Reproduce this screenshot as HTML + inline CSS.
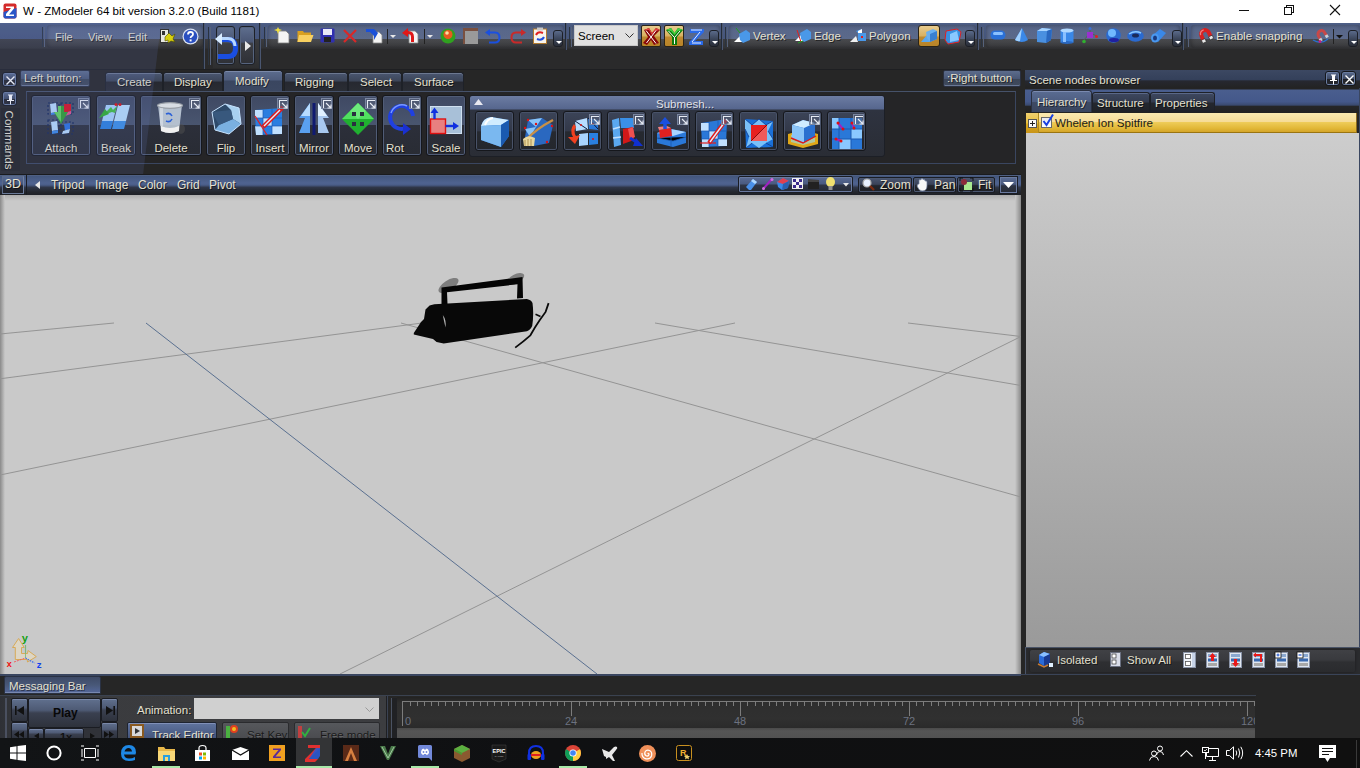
<!DOCTYPE html>
<html><head><meta charset="utf-8">
<style>
*{box-sizing:border-box;margin:0;padding:0}
html,body{width:1360px;height:768px;overflow:hidden;background:#262626;font-family:"Liberation Sans",sans-serif;position:relative}
.a{position:absolute}
svg{position:absolute;overflow:visible}
.t{position:absolute;white-space:nowrap;font-size:11.5px;color:#e4e0d0;text-shadow:1px 1px 0 rgba(0,0,0,.55);line-height:14px}
#title{left:0;top:0;width:1360px;height:23px;background:#fff}
#tb{left:0;top:23px;width:1360px;height:47px;background:#2a2a2b}
.band{position:absolute;top:23px;height:26px;background:linear-gradient(#4e6088 0,#4a5a80 2px,#45557b 16px,#3b3c40 16px,#323336 25px,#2b2b2d 26px)}
.grp{position:absolute;top:25px;height:23px;border-radius:3px;background:linear-gradient(rgba(255,255,255,.07),rgba(255,255,255,.12) 14px,rgba(255,255,255,.07) 14px,rgba(255,255,255,.03));box-shadow:inset 0 0 4px rgba(0,0,0,.35)}
.sep{position:absolute;top:23px;width:2px;height:27px;background:#232a36;border-right:1px solid #4a5670}
.grip{position:absolute;top:27px;width:3px;height:20px;border-left:1px solid #2a3340;border-right:1px solid #56627a}
.ovf{position:absolute;top:30px;width:10px;height:17px;border:1px solid #1c1f26;border-radius:3px;background:linear-gradient(#5a6a8a,#3a4458 55%,#2a2e38)}
.ovf:after{content:"";position:absolute;left:2px;top:10px;border-left:3px solid transparent;border-right:3px solid transparent;border-top:3px solid #fff}
#vph{left:0;top:175px;width:1021px;height:20px;background:linear-gradient(#4f6391,#3a4a6a 45%,#262a33 55%,#1e2026)}
#vp{left:0;top:195px;width:1021px;height:479px;background:#c9c9c9;overflow:hidden}
#rp{left:1026px;top:133px;width:333px;height:514px;background:linear-gradient(#cdcdcd,#9a9a9a)}
#msg{left:0;top:674px;width:1360px;height:64px;background:#262626;border-top:1px solid #3d4a60}
#task{left:0;top:738px;width:1360px;height:30px;background:linear-gradient(90deg,#121416,#0f1012 40%,#101010)}

.xbtn{width:15px;height:15px;border:1px solid #15171c;border-radius:3px;background:linear-gradient(#5a6c90,#3e4a64 50%,#202228 55%,#262830);box-shadow:inset 0 0 0 1px #6a7ca0}
.lbl{height:17px;border:1px solid #2a3040;border-radius:2px;background:linear-gradient(#5c6c8c,#4a5876 50%,#3c4658 55%,#404a5c);box-shadow:inset 0 -1px 0 #6a7894}
.tab{top:72px;height:19px;border:1px solid #1e2128;border-bottom:none;border-radius:3px 3px 0 0;background:linear-gradient(#4a5670,#3c4558 45%,#262830 50%,#2a2d34);box-shadow:inset 0 1px 0 #6c7890}
.tab.act{top:70px;height:21px;background:linear-gradient(#5c6c8e,#4e5c7c 45%,#3a4660 50%,#3c4862);box-shadow:inset 0 1px 0 #7a88a8}
.cbtn{top:95px;height:61px;border:1px solid #15171c;border-radius:3px;background:linear-gradient(#3f4963,#49556f 49%,#2c2f3a 50%,#292c34);box-shadow:inset 0 0 0 1px #505c76}
.sbtn{top:111px;width:39px;height:40px;border:1px solid #15171c;border-radius:3px;background:linear-gradient(#3c4458,#323848 50%,#262930 52%,#24272d);box-shadow:inset 0 0 0 1px #485268}
.crn{width:11px;height:11px;border:1px solid #7a86a0;background:rgba(90,100,125,.6)}

#vp{left:0;top:195px;width:1021px;height:479px;background:#c9c9c9;overflow:hidden}
#rp{left:1026px;top:133px;width:333px;height:514px;background:linear-gradient(#cdcdcd,#9a9a9a)}
#msg{left:0;top:674px;width:1360px;height:64px;background:#262626;border-top:1px solid #3d4a60}
#task{left:0;top:738px;width:1360px;height:30px;background:linear-gradient(90deg,#121416,#0f1012 40%,#101010)}
.vbtn{top:177px;height:16px;border:1px solid #1a1d24;border-radius:2px;background:linear-gradient(#4a5670,#3a4258 45%,#22252c 55%,#1e2026);box-shadow:inset 0 0 0 1px #4a5670}

.pbtn{border:1px solid #1a1c22;border-radius:2px;background:linear-gradient(#60708e,#4e5a74 40%,#3a4050 50%,#2e323c);box-shadow:inset 0 1px 0 #7a88a8}
</style></head><body>
<!-- TITLE -->
<div id="title" class="a">
 <svg style="left:3px;top:3px" width="14" height="16" viewBox="0 0 14 16">
  <rect x="0.5" y="0.5" width="13" height="15" rx="2" fill="#d42a2a"/>
  <path d="M0.5 9 L13.5 5 L13.5 13.5 Q13.5 15.5 11.5 15.5 L2.5 15.5 Q0.5 15.5 0.5 13.5Z" fill="#2a55c8"/>
  <path d="M3 3.5 H11 V5.5 L6 11.5 H11 V13 H3 V11 L8 5 H3Z" fill="#fff"/>
 </svg>
 <div class="t" style="left:23px;top:4px;color:#000;text-shadow:none;font-size:11.6px">W - ZModeler 64 bit version 3.2.0 (Build 1181)</div>
 <div class="a" style="left:1239px;top:10px;width:10px;height:1px;background:#111"></div>
 <div class="a" style="left:1286px;top:5px;width:8px;height:8px;border:1px solid #111"></div>
 <div class="a" style="left:1284px;top:7px;width:8px;height:8px;border:1px solid #111;background:#fff"></div>
 <svg style="left:1330px;top:5px" width="10" height="10"><path d="M0 0 L10 10 M10 0 L0 10" stroke="#111" stroke-width="1.1"/></svg>
</div>
<!-- TOOLBAR -->
<div id="tb" class="a"></div>
<div class="band" style="left:0;width:1360px"></div>

<!-- group separators & grippers -->
<div class="sep" style="left:203px;height:46px"></div>
<div class="grip" style="left:42px"></div>
<div class="grp" style="left:47px;width:156px"></div>
<div class="t" style="left:55px;top:30px;font-size:11px">File</div>
<div class="t" style="left:88px;top:30px;font-size:11px">View</div>
<div class="t" style="left:128px;top:30px;font-size:11px">Edit</div>
<svg style="left:160px;top:29px" width="16" height="15" viewBox="0 0 16 15">
 <rect x="0.5" y="0.5" width="8" height="13" fill="#e8e8e0" stroke="#333"/>
 <rect x="2" y="2" width="3" height="4" fill="#333"/>
 <path d="M5 8 L9 4 L12 7 L15 5 L13 10 L15 13 L11 12 L8 14 L8 11 L5 12Z" fill="#d8d010" stroke="#4a4a00" stroke-width=".6"/>
</svg>
<svg style="left:182px;top:28px" width="17" height="17" viewBox="0 0 17 17">
 <circle cx="8.5" cy="8.5" r="8" fill="#d8e0f0"/>
 <circle cx="8.5" cy="8.5" r="6.8" fill="#2a4fc0"/>
 <path d="M6 6.5 Q6 4 8.5 4 Q11 4 11 6.3 Q11 7.8 9.3 8.5 Q8.6 8.9 8.6 10" stroke="#fff" stroke-width="1.8" fill="none"/>
 <rect x="7.6" y="11.4" width="2" height="2" fill="#fff"/>
</svg>
<!-- undo group -->
<div class="grip" style="left:208px;height:38px"></div>
<div class="a" style="left:213px;top:39px;width:46px;height:29px;background:linear-gradient(#3a3b3e,#2e2f31)"></div>
<div class="a" style="left:216px;top:26px;width:19px;height:39px;border:1px solid #1e2128;border-radius:3px;box-shadow:inset 0 0 0 1px #56647e;background:linear-gradient(#5e6e8e,#4a5674 40%,#3c3e44 45%,#2e3036)"></div>
<div class="a" style="left:239px;top:26px;width:16px;height:39px;border:1px solid #1e2128;border-radius:3px;box-shadow:inset 0 0 0 1px #56647e;background:linear-gradient(#5e6e8e,#4a5674 40%,#3c3e44 45%,#2e3036)"></div>
<svg style="left:215px;top:33px" width="23" height="28" viewBox="0 0 23 28">
 <path d="M6 6.5 H13 Q20.5 6.5 20.5 15 Q20.5 23.5 13 23.5 H3" stroke="#1a4ee0" stroke-width="5" fill="none"/>
 <path d="M6 5.5 H13 Q19.5 5.5 20 13" stroke="#b8d8ff" stroke-width="3" fill="none"/>
 <path d="M0 6 L7 0 L7 12Z" fill="#d8ecff"/>
</svg>
<svg style="left:245px;top:41px" width="6" height="10"><path d="M0 0 L6 5 L0 10Z" fill="#e8e8e8"/></svg>
<div class="sep" style="left:259px;height:46px"></div>
<!-- group C -->
<div class="grip" style="left:264px"></div>
<div class="grp" style="left:268px;width:296px"></div>
<svg style="left:274px;top:27px" width="16" height="17" viewBox="0 0 16 17">
 <path d="M4 4 H12 L15 7 V16 H4Z" fill="#f4f4f4" stroke="#7c7c7c" stroke-width=".8"/>
 <path d="M0 3 L3 2 L4 0 L5 2 L8 3 L5 4 L4 7 L3 4Z" fill="#f0e040"/>
</svg>
<svg style="left:297px;top:29px" width="17" height="14" viewBox="0 0 17 14">
 <path d="M0.5 2 H6 L7 3.5 H14 V13 H0.5Z" fill="#d8a020"/>
 <path d="M2 6 H16.5 L14 13 H0.5Z" fill="#f8d060"/>
</svg>
<svg style="left:320px;top:28px" width="15" height="15" viewBox="0 0 15 15">
 <rect x="0.5" y="0.5" width="14" height="14" rx="1" fill="#3030b0"/>
 <rect x="3" y="1" width="9" height="6" fill="#e8e8f8"/>
 <rect x="4" y="9" width="7" height="5" fill="#222"/>
</svg>
<svg style="left:343px;top:29px" width="14" height="14"><path d="M1 1 L13 13 M13 1 L1 13" stroke="#d82828" stroke-width="2.2"/></svg>
<svg style="left:366px;top:27px" width="17" height="17" viewBox="0 0 17 17">
 <path d="M7 5 H13 L16 8 V16 H7Z" fill="#f4f4f4" stroke="#888" stroke-width=".8"/>
 <path d="M0 2 H8 L12 6 L8 13 L8 9 L4 5 L0 5Z" fill="#1a50d8"/>
</svg>
<div class="a" style="left:387px;top:29px;width:1px;height:15px;background:#222"></div>
<svg style="left:390px;top:35px" width="6" height="4"><path d="M0 0 H6 L3 3Z" fill="#e8e8e8"/></svg>
<svg style="left:402px;top:27px" width="17" height="17" viewBox="0 0 17 17">
 <path d="M7 4 H13 L16 7 V16 H7Z" fill="#f4f4f4" stroke="#888" stroke-width=".8"/>
 <path d="M0 6 L6 1 V4 Q12 4 12 10 V15 H9 V10 Q9 7 6 7 V10Z" fill="#e01818"/>
</svg>
<div class="a" style="left:424px;top:29px;width:1px;height:15px;background:#222"></div>
<svg style="left:427px;top:35px" width="6" height="4"><path d="M0 0 H6 L3 3Z" fill="#e8e8e8"/></svg>
<svg style="left:440px;top:28px" width="16" height="16" viewBox="0 0 16 16">
 <circle cx="8" cy="8" r="7.5" fill="#30a020"/>
 <circle cx="8" cy="6.5" r="4.5" fill="#e85a20"/>
 <circle cx="7" cy="5" r="1.8" fill="#ffe0a0"/>
</svg>
<svg style="left:463px;top:28px" width="15" height="16" viewBox="0 0 15 16">
 <rect x="0" y="0" width="15" height="16" fill="#7a5040"/>
 <rect x="2" y="3" width="13" height="13" fill="#9a9a9a"/>
</svg>
<svg style="left:485px;top:29px" width="16" height="15" viewBox="0 0 16 15">
 <path d="M5 3.5 H10 Q14.5 3.5 14.5 8.5 Q14.5 13.5 10 13.5 H4" stroke="#1a50e0" stroke-width="2" fill="none"/>
 <path d="M0 3.5 L5 0 V7Z" fill="#1a50e0"/>
</svg>
<svg style="left:510px;top:29px" width="16" height="15" viewBox="0 0 16 15">
 <path d="M11 3.5 H6 Q1.5 3.5 1.5 8.5 Q1.5 13.5 6 13.5 H12" stroke="#c82a2a" stroke-width="2" fill="none"/>
 <path d="M16 3.5 L11 0 V7Z" fill="#c82a2a"/>
</svg>
<svg style="left:533px;top:27px" width="14" height="17" viewBox="0 0 14 17">
 <rect x="0.5" y="2" width="13" height="14.5" fill="#f8f4ec" stroke="#b07a30"/>
 <rect x="4" y="0.5" width="6" height="3" fill="#c8c8c8"/>
 <path d="M3 8 Q5 4 10 6" stroke="#e02020" stroke-width="2" fill="none"/>
 <path d="M11 10 Q9 14 4 12" stroke="#2050e0" stroke-width="2" fill="none"/>
</svg>
<div class="ovf" style="left:553px"></div>
<div class="sep" style="left:565px"></div>
<!-- group D -->
<div class="grip" style="left:569px"></div>
<div class="grp" style="left:572px;width:148px"></div>
<div class="a" style="left:574px;top:25px;width:64px;height:21px;background:#e1e1e1;border:1px solid #c8c8c8"></div>
<div class="t" style="left:578px;top:29px;color:#000;text-shadow:none;font-size:11.5px">Screen</div>
<svg style="left:625px;top:33px" width="9" height="5"><path d="M0.5 0.5 L4.5 4.5 L8.5 0.5" stroke="#333" fill="none"/></svg>
<div class="a" style="left:641px;top:25px;width:20px;height:22px;border:1px solid #2a2418;border-radius:2px;background:linear-gradient(#e8cc90,#d8b060 50%,#c08a30 55%,#b88428)"></div>
<svg style="left:643px;top:28px" width="17" height="17" viewBox="0 0 17 17"><path d="M1 2 L6 0 L9 5 L13 0 L17 2 L11 8 L16 15 L11 17 L8 12 L4 17 L0 15 L5 9Z" fill="#8a0808"/><path d="M1 2 L6 0 L9 5 L13 0 L17 2 L12 3 L9 7 L6 2Z" fill="#e04040"/><path d="M3 2.5 L13 15.5 M13 2.5 L3.5 15" stroke="#fff" stroke-width="1"/></svg>
<div class="a" style="left:664px;top:25px;width:20px;height:22px;border:1px solid #2a2418;border-radius:2px;background:linear-gradient(#e8cc90,#d8b060 50%,#c08a30 55%,#b88428)"></div>
<svg style="left:666px;top:28px" width="17" height="17" viewBox="0 0 17 17"><path d="M0 2 L5 0 L8.5 5 L12 0 L17 2 L11 9 L11 17 L6 17 L6 9Z" fill="#0a7a0a"/><path d="M0 2 L5 0 L8.5 5 L12 0 L17 2 L12 3 L8.5 7 L5 3Z" fill="#40d040"/><path d="M2.5 3 L8.5 9.5 L8.5 16 M8.5 9.5 L14 3" stroke="#fff" stroke-width="1" fill="none"/></svg>
<svg style="left:689px;top:29px" width="15" height="16" viewBox="0 0 15 16"><path d="M1 0 H15 V3 L6 12 H14 V16 H0 V13 L9 4 H1Z" fill="#2a6ae8"/><path d="M2 1 H13 M11 3 L3 13 M3 14 H12" stroke="#e8f0ff" stroke-width="1"/></svg>
<div class="ovf" style="left:709px"></div>
<div class="sep" style="left:721px"></div>
<!-- group E -->
<div class="grip" style="left:725px"></div>
<div class="grp" style="left:729px;width:247px"></div>
<svg style="left:734px;top:28px" width="17" height="16" viewBox="0 0 17 16"><path d="M0 14 L8 6 L8 14Z" fill="#fff"/><path d="M5 6 L12 2 L16 5 L16 12 L9 15 L6 12Z" fill="#4a98e8"/><path d="M2 0 L6 5" stroke="#20a020"/></svg>
<div class="t" style="left:753px;top:29px;font-size:11.5px">Vertex</div>
<svg style="left:795px;top:27px" width="17" height="18" viewBox="0 0 17 18"><path d="M0 14 L8 6 L8 14Z" fill="#fff"/><path d="M5 6 L12 2 L16 5 L16 12 L9 15 L6 12Z" fill="#4a98e8"/><path d="M2 3 L6 15" stroke="#e02020"/><path d="M3 16 L8 14" stroke="#20a020"/></svg>
<div class="t" style="left:814px;top:29px;font-size:11.5px">Edge</div>
<svg style="left:850px;top:28px" width="17" height="16" viewBox="0 0 17 16"><path d="M0 14 L6 8 L8 14Z" fill="#f0f0f0"/><path d="M6 3 L12 1 L12 5 L16 5 L16 13 L8 13 L8 5Z" fill="#4a98e8"/><path d="M8 3 L12 1 V5 H8Z" fill="#fff"/><rect x="11" y="8" width="2" height="2" fill="#e02020"/></svg>
<div class="t" style="left:869px;top:29px;font-size:11.5px">Polygon</div>
<div class="a" style="left:918px;top:25px;width:22px;height:22px;border:1px solid #2a2418;border-radius:3px;background:linear-gradient(#e8cc90,#d8b060 50%,#c08a30 55%,#b88428)"></div>
<svg style="left:921px;top:28px" width="17" height="16" viewBox="0 0 17 16"><path d="M0 14 L6 7 L9 14Z" fill="#5aa8f0"/><path d="M5 4 L12 1 L16 3 L16 11 L9 14 L6 10Z" fill="#6ab0f0"/><path d="M9 6 L16 3 V11 L9 14Z" fill="#3a80d0"/></svg>
<svg style="left:944px;top:28px" width="18" height="17" viewBox="0 0 18 17"><path d="M2 3 L13 1 L17 4 L15 14 L4 16 L1 12Z" fill="#3a90e0" stroke="#e02020" stroke-width="1"/><path d="M6 6 L13 3 L15 12 L6 14Z" fill="#8ac8ff"/></svg>
<div class="ovf" style="left:965px"></div>
<div class="sep" style="left:977px"></div>
<!-- group F -->
<div class="grip" style="left:981px"></div>
<div class="grp" style="left:986px;width:194px"></div>
<svg style="left:990px;top:30px" width="16" height="10" viewBox="0 0 16 10"><rect x="0.5" y="0.5" width="15" height="9" rx="4.5" fill="#2a70d8"/><rect x="3" y="2" width="10" height="3" rx="1.5" fill="#8ac0ff"/></svg>
<svg style="left:1014px;top:28px" width="14" height="15" viewBox="0 0 14 15"><path d="M8 0 L14 12 Q8 16 1 12Z" fill="#3a88e8"/><path d="M8 0 L1 12 Q4 14 6 13Z" fill="#a0d0ff"/></svg>
<svg style="left:1037px;top:28px" width="15" height="15" viewBox="0 0 15 15"><path d="M0 3 L5 0 L15 1 L14 12 L9 15 L0 14Z" fill="#4a90e0"/><path d="M0 3 L5 0 L15 1 L10 3Z" fill="#a8d4ff"/><path d="M10 3 L15 1 L14 12 L9 15Z" fill="#2a68c0"/></svg>
<svg style="left:1060px;top:28px" width="14" height="16" viewBox="0 0 14 16"><rect x="0.5" y="2" width="13" height="12.5" fill="#3a88e8"/><ellipse cx="7" cy="2.5" rx="6.5" ry="2" fill="#b0d8ff"/><ellipse cx="7" cy="14.5" rx="6.5" ry="1.5" fill="#2a68c0"/><rect x="3" y="4" width="3" height="10" fill="#8ac0ff"/></svg>
<svg style="left:1082px;top:27px" width="16" height="17" viewBox="0 0 16 17"><path d="M8 6 L1 14 M8 6 L15 9 M8 6 L8 1" stroke="#5a5a5a" stroke-width="1"/><rect x="5" y="5" width="6" height="6" fill="#9a30d0"/><circle cx="8" cy="1.5" r="1.5" fill="#3a70d8"/><circle cx="14.5" cy="9.5" r="1.5" fill="#e02020"/><circle cx="2" cy="14.5" r="1.8" fill="#30b030"/></svg>
<svg style="left:1106px;top:28px" width="15" height="15" viewBox="0 0 15 15"><circle cx="7.5" cy="7.5" r="7.3" fill="#2a6ad0"/><circle cx="6" cy="5" r="4" fill="#70b8ff"/><ellipse cx="8" cy="12" rx="5" ry="2" fill="#2020a0"/></svg>
<svg style="left:1127px;top:30px" width="17" height="12" viewBox="0 0 17 12"><ellipse cx="8.5" cy="6" rx="8.3" ry="5.8" fill="#2a6ad0"/><ellipse cx="8.5" cy="5.5" rx="3.5" ry="2" fill="#1a2a5a"/><path d="M2 4 Q8 0 14 3" stroke="#8ac8ff" stroke-width="1.5" fill="none"/></svg>
<svg style="left:1150px;top:28px" width="17" height="15" viewBox="0 0 17 15"><path d="M2 8 L10 1 L16 5 L8 14Z" fill="#3a88e8"/><ellipse cx="5" cy="10" rx="4" ry="4.5" fill="#4a98f0"/><ellipse cx="5" cy="10" rx="2" ry="2.5" fill="#1a3a80"/></svg>
<div class="ovf" style="left:1172px"></div>
<div class="sep" style="left:1182px"></div>
<!-- group G -->
<div class="grip" style="left:1186px"></div>
<div class="grp" style="left:1191px;width:169px"></div>
<svg style="left:1197px;top:27px" width="17" height="16" viewBox="0 0 17 16"><g transform="rotate(-25 8.5 8)"><path d="M2.5 12 V7 A6 6 0 0 1 14.5 7 V12 H10.5 V7 A2 2 0 0 0 6.5 7 V12Z" fill="#d82020"/><path d="M4 6 A4.5 4.5 0 0 1 9 2.5" stroke="#f08080" stroke-width="1.2" fill="none"/><rect x="2.5" y="11" width="4" height="3.5" fill="#e8e8e8" stroke="#222" stroke-width=".6"/><rect x="10.5" y="11" width="4" height="3.5" fill="#e8e8e8" stroke="#222" stroke-width=".6"/></g></svg>
<div class="t" style="left:1216px;top:29px;font-size:11.6px">Enable snapping</div>
<svg style="left:1313px;top:27px" width="17" height="17" viewBox="0 0 17 17"><g transform="rotate(-30 9 8)"><path d="M4 11 V7 A5 5 0 0 1 14 7 V11 H11 V7 A2 2 0 0 0 7 7 V11Z" fill="#c84848"/><rect x="4" y="10" width="3" height="3" fill="#c8d0d8"/><rect x="11" y="10" width="3" height="3" fill="#c8d0d8"/></g><path d="M0 13 Q8 18 15 12" stroke="#2a70d0" stroke-width="1.3" fill="none"/><circle cx="7" cy="14.5" r="1.5" fill="#c02080"/></svg>
<div class="a" style="left:1333px;top:29px;width:1px;height:15px;background:#222"></div>
<svg style="left:1336px;top:35px" width="7" height="4"><path d="M0 0 H7 L3.5 3.5Z" fill="#111"/></svg>
<div class="ovf" style="left:1348px"></div>

<!-- COMMAND ROW -->
<div class="a" style="left:0;top:69px;width:1021px;height:1px;background:#1e1f22"></div>
<div class="xbtn a" style="left:2px;top:72px"><svg style="left:3px;top:3px" width="9" height="9"><path d="M0.5 0.5 L8.5 8.5 M8.5 0.5 L0.5 8.5" stroke="#fff" stroke-width="1.4"/></svg></div>
<div class="xbtn a" style="left:2px;top:91px"><svg style="left:3px;top:2px" width="9" height="11" viewBox="0 0 9 11"><path d="M2 0.5 H7 V1.5 H6 V6 H8 V7 H5 V10.5 H4 V7 H1 V6 H3 V1.5 H2Z" fill="#fff"/></svg></div>
<div class="a" style="left:1px;top:108px;width:19px;height:63px;background:rgba(0,0,0,.12)"></div><div class="t" style="left:-21px;top:133px;transform:rotate(90deg);font-size:11.5px;width:60px;text-align:center">Commands</div>
<div class="lbl a" style="left:20px;top:70px;width:70px"></div>
<div class="t" style="left:24px;top:71px;font-size:11.5px">Left button:</div>
<div class="tab a" style="left:105px;width:58px"></div><div class="t" style="left:117px;top:75px">Create</div>
<div class="tab a" style="left:163px;width:60px"></div><div class="t" style="left:174px;top:75px">Display</div>
<div class="tab act a" style="left:223px;width:60px"></div><div class="t" style="left:235px;top:74px">Modify</div>
<div class="tab a" style="left:284px;width:64px"></div><div class="t" style="left:295px;top:75px">Rigging</div>
<div class="tab a" style="left:348px;width:54px"></div><div class="t" style="left:360px;top:75px">Select</div>
<div class="tab a" style="left:402px;width:62px"></div><div class="t" style="left:414px;top:75px">Surface</div>
<div class="lbl a" style="left:943px;top:70px;width:78px"></div>
<div class="t" style="left:947px;top:71px;font-size:11.5px">:Right button</div>
<div class="a" style="left:26px;top:91px;width:990px;height:73px;border:1px solid #3a4660;border-top-color:#46526a;background:#252527"></div>
<div class="cbtn a" style="left:31px;width:60px"></div>
<div class="t" style="left:31px;width:60px;text-align:center;top:141px;font-size:11.5px">Attach</div>
<div class="cbtn a" style="left:96px;width:40px"></div>
<div class="t" style="left:96px;width:40px;text-align:center;top:141px;font-size:11.5px">Break</div>
<div class="cbtn a" style="left:140px;width:62px"></div>
<div class="t" style="left:140px;width:62px;text-align:center;top:141px;font-size:11.5px">Delete</div>
<div class="cbtn a" style="left:206px;width:40px"></div>
<div class="t" style="left:206px;width:40px;text-align:center;top:141px;font-size:11.5px">Flip</div>
<div class="cbtn a" style="left:250px;width:40px"></div>
<div class="t" style="left:250px;width:40px;text-align:center;top:141px;font-size:11.5px">Insert</div>
<div class="cbtn a" style="left:294px;width:40px"></div>
<div class="t" style="left:294px;width:40px;text-align:center;top:141px;font-size:11.5px">Mirror</div>
<div class="cbtn a" style="left:338px;width:40px"></div>
<div class="t" style="left:338px;width:40px;text-align:center;top:141px;font-size:11.5px">Move</div>
<div class="cbtn a" style="left:382px;width:40px"></div>
<div class="t" style="left:386px;top:141px;font-size:11.5px">Rot</div>
<div class="cbtn a" style="left:426px;width:40px"></div>
<div class="t" style="left:426px;width:40px;text-align:center;top:141px;font-size:11.5px">Scale</div>
<div class="a" style="left:469px;top:95px;width:416px;height:62px;border:1px solid #1c1f26;border-radius:3px;background:linear-gradient(#6c7ca2,#56668e 13px,#2e3340 14px,#2a2d35)"></div>
<svg style="left:474px;top:99px" width="9" height="6"><path d="M0 6 L4.5 0 L9 6Z" fill="#e8e8f0"/></svg>
<div class="t" style="left:656px;top:97px;font-size:11.5px;color:#e0e0e8">Submesh...</div>
<div class="sbtn a" style="left:475px"></div>
<div class="sbtn a" style="left:519px"></div>
<div class="sbtn a" style="left:563px"></div>
<div class="sbtn a" style="left:607px"></div>
<div class="sbtn a" style="left:651px"></div>
<div class="sbtn a" style="left:695px"></div>
<div class="sbtn a" style="left:739px"></div>
<div class="sbtn a" style="left:783px"></div>
<div class="sbtn a" style="left:827px"></div>


<!-- COMMAND ICONS -->
<svg style="left:47px;top:102px" width="28" height="34" viewBox="0 0 28 34">
 <g stroke="#15285a" stroke-width="1.2" stroke-dasharray="2 2" fill="none"><rect x="1" y="1" width="11" height="11"/><rect x="14" y="1" width="12" height="11"/><rect x="1" y="18" width="11" height="14"/><rect x="14" y="20" width="12" height="12"/></g>
 <path d="M3 2 L9 1 L10 10 L4 11Z" fill="#b8dcff"/><path d="M4 11 L10 10 V12 L4 13Z" fill="#3a88e8"/>
 <path d="M17 2 L24 2 L24 9 L17 11Z" fill="#d81020"/><path d="M17 11 L24 9 V12 L18 14Z" fill="#e05090"/>
 <path d="M4 20 L10 19 L11 28 L5 29Z" fill="#b8dcff"/><path d="M5 29 L11 28 V31 L5 32Z" fill="#3a88e8"/>
 <path d="M17 22 L23 21 L23 27 L18 29Z" fill="#2a70e0"/><path d="M16 29 L23 27 L22 31 L15 32Z" fill="#b8dcff"/>
 <path d="M7 10 H11 V4 L17 4 V10 H21 L14 22Z" fill="#30a030"/><path d="M11 4 L14 4 L14 20 L7 10 H11Z" fill="#60d060"/>
</svg>
<svg style="left:99px;top:103px" width="34" height="29" viewBox="0 0 34 29">
 <path d="M7 2 L18 2 L14 18 L3 18Z" fill="#a8d4ff"/><path d="M3 18 L14 18 L12 26 L1 26Z" fill="#2a80e0"/>
 <path d="M19 2 L31 2 L27 18 L15 18Z" fill="#b8e0ff"/><path d="M15 18 L27 18 L25 26 L13 26Z" fill="#3a90e8"/>
 <path d="M4 12 L12 4 L14 7 L18 3 L16 10 L13 9Z" fill="#40c040"/>
 <path d="M0 15 L10 11 L6 6Z" fill="#30b030"/>
 <circle cx="17" cy="1.5" r="1.5" fill="#e01010"/><circle cx="21" cy="1.5" r="1.5" fill="#e01010"/>
</svg>
<svg style="left:157px;top:102px" width="28" height="34" viewBox="0 0 28 34">
 <ellipse cx="24" cy="27" rx="4" ry="5" fill="#505050" opacity=".5"/>
 <path d="M1 3 L25 3 L22 29 Q13 33 4 29Z" fill="#c8d4e0" opacity=".85"/>
 <path d="M4 24 Q13 28 22 24 L22 29 Q13 33 4 29Z" fill="#f0f0f0"/>
 <ellipse cx="13" cy="3.5" rx="12.5" ry="2.8" fill="#d8dde4" stroke="#9aa0a8" stroke-width="1.2"/>
 <path d="M9 12 Q13 10 15 14 M15 17 Q13 21 9 19" stroke="#2a60d8" stroke-width="1.6" fill="none"/>
 <rect x="3" y="6" width="3" height="18" fill="#fff" opacity=".35"/>
</svg>
<svg style="left:211px;top:103px" width="31" height="32" viewBox="0 0 31 32">
 <path d="M1 9 L14 1 L28 5 L30 21 L18 31 L4 27Z" fill="#2e4a6a"/>
 <path d="M14 1 L28 5 L30 21 L22 16 L20 7Z" fill="#a8d0f0"/>
 <path d="M4 27 L18 31 L30 21 L22 16 L8 22Z" fill="#7ab0e0"/>
 <path d="M1 9 L20 7 L22 16 L8 22Z" fill="#3a5a80" opacity=".9"/>
 <path d="M1 9 L14 1 L28 5 L30 21 L18 31 L4 27Z" stroke="#c8e4ff" stroke-width="1" fill="none"/>
</svg>
<svg style="left:254px;top:105px" width="31" height="31" viewBox="0 0 31 31">
 <path d="M1 5 L28 3 L28 29 L2 30Z" fill="#2a7ee0"/>
 <path d="M1 5 H9 V13 H1Z M9 13 H18 V21 H9Z M18 21 H28 V29 H18Z M1 21 H9 V30 H2Z" fill="#c0e0ff"/>
 <path d="M1 13 H28 M1 21 H28 M9 5 V30 M18 4 V30" stroke="#1a58b0" stroke-width=".7"/>
 <path d="M1 11 L13 30" stroke="#e02020" stroke-width="1.3"/>
 <path d="M9 22 L29 2" stroke="#e01818" stroke-width="4.5"/><path d="M10 21 L26 5" stroke="#e0f0ff" stroke-width="1.5"/>
</svg>
<svg style="left:298px;top:102px" width="32" height="33" viewBox="0 0 32 33">
 <path d="M12 1 L1 16 L7 16 L1 31 L12 31Z" fill="#5aa0f0"/><path d="M12 1 L3 14 L12 14Z" fill="#b8dcff"/>
 <rect x="14.5" y="1" width="3" height="32" fill="#101a70"/>
 <path d="M20 1 L31 16 L25 16 L31 31 L20 31Z" fill="#a8c8f0"/><path d="M20 1 L29 14 L20 14Z" fill="#e0f0ff"/>
</svg>
<svg style="left:342px;top:103px" width="32" height="32" viewBox="0 0 32 32">
 <path d="M16 0 L32 16 L16 32 L0 16Z" fill="#20b030"/>
 <path d="M16 0 L32 16 L0 16Z" fill="#50e060"/>
 <path d="M16 0 L24 8 L16 16 L8 8Z" fill="#80f090" opacity=".6"/>
 <rect x="10" y="9" width="4" height="4" fill="#2a3040"/><rect x="18" y="9" width="4" height="4" fill="#2a3040"/>
 <rect x="10" y="19" width="4" height="4" fill="#2a3040"/><rect x="18" y="19" width="4" height="4" fill="#2a3040"/>
</svg>
<svg style="left:387px;top:103px" width="29" height="32" viewBox="0 0 29 32">
 <path d="M26 13 A11.5 11.5 0 1 0 19 25" stroke="#2040e0" stroke-width="4" fill="none"/>
 <path d="M4 10 A11.5 11.5 0 0 1 20 3" stroke="#7a9aff" stroke-width="1.5" fill="none"/>
 <path d="M16 20 L24 26 L16 32Z" fill="#1a30d0"/>
</svg>
<svg style="left:430px;top:106px" width="32" height="28" viewBox="0 0 32 28">
 <rect x="0.5" y="0.5" width="31" height="27" fill="#a8c0d8" stroke="#d0e0f0" stroke-width="1"/>
 <rect x="0.5" y="13" width="15" height="14.5" fill="#e88080" stroke="#e01010" stroke-width="1.4"/>
 <path d="M4.5 13 V5" stroke="#1030e0" stroke-width="2.4"/><path d="M0.5 7 L4.5 1.5 L8.5 7Z" fill="#1030e0"/>
 <path d="M15.5 20 H24" stroke="#1030e0" stroke-width="2.4"/><path d="M23 16 L29 20 L23 24Z" fill="#1030e0"/>
</svg>
<!-- submesh icons -->
<svg style="left:479px;top:116px" width="32" height="31" viewBox="0 0 32 31">
 <path d="M2 10 Q4 2 12 1 L30 4 L30 20 L22 31 L2 24Z" fill="#2a78d8"/>
 <path d="M2 10 Q4 2 12 1 L30 4 L22 9 Z" fill="#d0ecff"/>
 <path d="M2 10 L22 9 L22 31 L2 24Z" fill="#7ab8f0"/>
 <path d="M6 9 Q8 3 14 2" stroke="#fff" stroke-width="2" fill="none"/>
 <path d="M22 9 L30 4 L30 20 L22 31Z" fill="#1a5ab0"/>
</svg>
<svg style="left:522px;top:117px" width="33" height="30" viewBox="0 0 33 30">
 <path d="M6 3 L20 1 L31 8 L27 26 L12 29 L3 20Z" fill="#2a68c0"/>
 <path d="M6 3 L20 1 L14 10 Z M3 12 L14 10 L8 20Z" fill="#8ac4f8"/>
 <circle cx="6" cy="3" r="1.2" fill="#e01010"/><circle cx="14" cy="7" r="1.2" fill="#e01010"/><circle cx="3" cy="11" r="1.2" fill="#e01010"/><circle cx="30" cy="9" r="1.2" fill="#e01010"/><circle cx="25" cy="25" r="1.2" fill="#e01010"/>
 <path d="M5 22 Q14 12 31 3" stroke="#c89048" stroke-width="2.5" fill="none"/>
 <path d="M1 22 Q6 17 13 21 L12 29 L2 29Z" fill="#e8d8a0"/><path d="M3 23 V29 M6 22 V29 M9 22 V29" stroke="#a08040" stroke-width=".8"/>
</svg>
<svg style="left:567px;top:116px" width="33" height="30" viewBox="0 0 33 30">
 <path d="M8 5 L20 2 L21 13 L9 15Z" fill="#b8dcff"/><path d="M21 2 L31 4 L31 14 L22 13Z" fill="#2a78d8"/>
 <path d="M12 18 L21 17 L21 29 L12 30Z" fill="#a8d4ff"/><path d="M22 17 L31 17 L31 28 L22 29Z" fill="#2a80e0"/>
 <path d="M8 5 L20 13" stroke="#0a1a40" stroke-width="1"/><path d="M21 2 L31 13" stroke="#0a1a40" stroke-width="1"/>
 <path d="M7 8 Q2 14 6 21 L1 21 L8 28 L13 19 L9 20 Q6 15 9 11Z" fill="#f04020"/>
 <circle cx="14" cy="9" r="1" fill="#e01010"/><circle cx="26" cy="8" r="1" fill="#e01010"/><circle cx="26" cy="23" r="1" fill="#e01010"/>
</svg>
<svg style="left:611px;top:117px" width="33" height="31" viewBox="0 0 33 31">
 <path d="M1 3 L8 1 L10 28 L3 30Z" fill="#5aa8f0"/><path d="M2 12 L9 10 M2 21 L10 20" stroke="#c0e0ff" stroke-width="1.5"/>
 <path d="M9 1 L22 1 L23 11 L10 11Z" fill="#3a90e8"/>
 <path d="M12 12 L22 10 L23 23 L12 27Z" fill="#d01818"/><path d="M17 12 L22 10 L24 20 L19 22Z" fill="#f05050"/>
 <path d="M19 21 L27 26" stroke="#1030d0" stroke-width="3"/><path d="M25 21 L32 29 L22 29Z" fill="#1030d0"/>
</svg>
<svg style="left:655px;top:117px" width="32" height="30" viewBox="0 0 32 30">
 <path d="M2 16 L16 12 L31 15 L31 26 L18 30 L2 26Z" fill="#2a78d8"/>
 <path d="M2 16 L16 12 L31 15 L18 19Z" fill="#a8d4ff"/><path d="M16 12 V30 M2 21 L18 24 L31 20" stroke="#1a58b0" stroke-width=".8"/>
 <path d="M4 13 L16 11 L17 19 L5 21Z" fill="#e02020"/><path d="M4 13 L16 11 L12 9 L3 10Z" fill="#f08080"/>
 <path d="M10 12 V6" stroke="#1a50e0" stroke-width="3.5"/><path d="M4 7 L10 0 L16 7Z" fill="#1a50e0"/>
</svg>
<svg style="left:699px;top:117px" width="32" height="31" viewBox="0 0 32 31">
 <path d="M2 6 L28 2 L27 29 L3 30Z" fill="#2a78d8"/>
 <path d="M2 6 H10 V14 H2Z M10 14 H19 V22 H10Z M19 22 H28 V29 H19Z M3 22 H10 V30 H3Z" fill="#c0e0ff"/>
 <path d="M2 14 H28 M2 22 H28 M10 5 V30 M19 4 V30" stroke="#1a58b0" stroke-width=".7"/>
 <path d="M1 26 H17" stroke="#e02020" stroke-width="1.2"/>
 <path d="M10 26 L27 3" stroke="#e01818" stroke-width="4"/><path d="M11 25 L25 6" stroke="#e0f0ff" stroke-width="1.4"/>
</svg>
<svg style="left:743px;top:117px" width="32" height="32" viewBox="0 0 32 32">
 <path d="M2 2 L30 4 L30 30 L3 31Z" fill="#1a70d8"/>
 <path d="M2 2 L9 8 L16 2 L23 8 L30 4 L25 14 L30 22 L23 26 L16 31 L9 26 L3 31 L6 20 L2 12Z" fill="#7ac0f8"/>
 <path d="M2 2 L9 8 M16 2 L9 8 M16 2 L23 8 M30 4 L23 8 M25 14 L30 22 M23 26 L30 30 M9 26 L3 31 M6 20 L2 12" stroke="#0a3a90" stroke-width=".8"/>
 <path d="M8 8 L24 8 L24 24 L8 24Z" fill="#e82020"/><path d="M8 24 L24 8 L24 24Z" fill="#f05a5a"/>
 <path d="M8 24 L24 8" stroke="#8a0a0a" stroke-width="1"/>
</svg>
<svg style="left:787px;top:117px" width="32" height="32" viewBox="0 0 32 32">
 <path d="M1 17 L16 13 L31 17 V27 L16 31 L1 27Z" fill="#e0a818"/>
 <path d="M4 18 L16 15 L28 18 V25 L16 28 L4 25Z" fill="#b0c8a0"/>
 <path d="M5 8 L16 3 L28 6 V20 L16 26 L5 22Z" fill="#2a70d0"/>
 <path d="M5 8 L16 3 L28 6 L17 11Z" fill="#d0ecff"/><path d="M5 8 L17 11 V26 L5 22Z" fill="#8ac4f8"/>
 <path d="M4 21 L16 26 L29 19" stroke="#e01818" stroke-width="1.4" fill="none"/>
</svg>
<svg style="left:831px;top:117px" width="32" height="32" viewBox="0 0 32 32">
 <rect x="1" y="1" width="30" height="31" fill="#2a78d8"/>
 <path d="M1 1 H8 V12 H1Z M20 12 H31 V22 H20Z M8 22 H20 V32 H8Z" fill="#8ac8ff"/>
 <path d="M8 1 V32 M20 1 V32 M1 12 H31 M1 22 H31" stroke="#1a58b0" stroke-width="1"/>
 <path d="M7 6 L12 12 M21 6 L23 11 M5 22 L10 24" stroke="#a020c0" stroke-width="2"/>
 <circle cx="7" cy="6" r="1.5" fill="#e01010"/><circle cx="12" cy="12" r="1.5" fill="#e01010"/><circle cx="21" cy="6" r="1.5" fill="#e01010"/><circle cx="23" cy="11" r="1.5" fill="#e01010"/><circle cx="5" cy="22" r="1.5" fill="#e01010"/><circle cx="10" cy="24" r="1.5" fill="#e01010"/>
</svg>
<div class="crn a" style="left:78px;top:98px"><svg style="left:1px;top:1px" width="9" height="9" viewBox="0 0 9 9"><path d="M0.5 8 V0.5 H8" stroke="#e8ecf4" stroke-width="1.1" fill="none"/><path d="M3 3 L8 8 M8 4.5 V8 H4.5" stroke="#e8ecf4" stroke-width="1.1" fill="none"/></svg></div>
<div class="crn a" style="left:189px;top:98px"><svg style="left:1px;top:1px" width="9" height="9" viewBox="0 0 9 9"><path d="M0.5 8 V0.5 H8" stroke="#e8ecf4" stroke-width="1.1" fill="none"/><path d="M3 3 L8 8 M8 4.5 V8 H4.5" stroke="#e8ecf4" stroke-width="1.1" fill="none"/></svg></div>
<div class="crn a" style="left:277px;top:98px"><svg style="left:1px;top:1px" width="9" height="9" viewBox="0 0 9 9"><path d="M0.5 8 V0.5 H8" stroke="#e8ecf4" stroke-width="1.1" fill="none"/><path d="M3 3 L8 8 M8 4.5 V8 H4.5" stroke="#e8ecf4" stroke-width="1.1" fill="none"/></svg></div>
<div class="crn a" style="left:321px;top:98px"><svg style="left:1px;top:1px" width="9" height="9" viewBox="0 0 9 9"><path d="M0.5 8 V0.5 H8" stroke="#e8ecf4" stroke-width="1.1" fill="none"/><path d="M3 3 L8 8 M8 4.5 V8 H4.5" stroke="#e8ecf4" stroke-width="1.1" fill="none"/></svg></div>
<div class="crn a" style="left:365px;top:98px"><svg style="left:1px;top:1px" width="9" height="9" viewBox="0 0 9 9"><path d="M0.5 8 V0.5 H8" stroke="#e8ecf4" stroke-width="1.1" fill="none"/><path d="M3 3 L8 8 M8 4.5 V8 H4.5" stroke="#e8ecf4" stroke-width="1.1" fill="none"/></svg></div>
<div class="crn a" style="left:409px;top:98px"><svg style="left:1px;top:1px" width="9" height="9" viewBox="0 0 9 9"><path d="M0.5 8 V0.5 H8" stroke="#e8ecf4" stroke-width="1.1" fill="none"/><path d="M3 3 L8 8 M8 4.5 V8 H4.5" stroke="#e8ecf4" stroke-width="1.1" fill="none"/></svg></div>
<div class="crn a" style="left:589px;top:114px"><svg style="left:1px;top:1px" width="9" height="9" viewBox="0 0 9 9"><path d="M0.5 8 V0.5 H8" stroke="#e8ecf4" stroke-width="1.1" fill="none"/><path d="M3 3 L8 8 M8 4.5 V8 H4.5" stroke="#e8ecf4" stroke-width="1.1" fill="none"/></svg></div>
<div class="crn a" style="left:633px;top:114px"><svg style="left:1px;top:1px" width="9" height="9" viewBox="0 0 9 9"><path d="M0.5 8 V0.5 H8" stroke="#e8ecf4" stroke-width="1.1" fill="none"/><path d="M3 3 L8 8 M8 4.5 V8 H4.5" stroke="#e8ecf4" stroke-width="1.1" fill="none"/></svg></div>
<div class="crn a" style="left:677px;top:114px"><svg style="left:1px;top:1px" width="9" height="9" viewBox="0 0 9 9"><path d="M0.5 8 V0.5 H8" stroke="#e8ecf4" stroke-width="1.1" fill="none"/><path d="M3 3 L8 8 M8 4.5 V8 H4.5" stroke="#e8ecf4" stroke-width="1.1" fill="none"/></svg></div>
<div class="crn a" style="left:721px;top:114px"><svg style="left:1px;top:1px" width="9" height="9" viewBox="0 0 9 9"><path d="M0.5 8 V0.5 H8" stroke="#e8ecf4" stroke-width="1.1" fill="none"/><path d="M3 3 L8 8 M8 4.5 V8 H4.5" stroke="#e8ecf4" stroke-width="1.1" fill="none"/></svg></div>
<div class="crn a" style="left:809px;top:114px"><svg style="left:1px;top:1px" width="9" height="9" viewBox="0 0 9 9"><path d="M0.5 8 V0.5 H8" stroke="#e8ecf4" stroke-width="1.1" fill="none"/><path d="M3 3 L8 8 M8 4.5 V8 H4.5" stroke="#e8ecf4" stroke-width="1.1" fill="none"/></svg></div>
<div class="crn a" style="left:853px;top:114px"><svg style="left:1px;top:1px" width="9" height="9" viewBox="0 0 9 9"><path d="M0.5 8 V0.5 H8" stroke="#e8ecf4" stroke-width="1.1" fill="none"/><path d="M3 3 L8 8 M8 4.5 V8 H4.5" stroke="#e8ecf4" stroke-width="1.1" fill="none"/></svg></div>
<div class="a" style="left:0;top:23px;width:170px;height:152px;background:rgba(100,120,190,.17);clip-path:polygon(0 0,161px 0,143px 152px,0 152px);pointer-events:none"></div>
<!-- VIEWPORT HEADER -->
<div class="a" style="left:0;top:174px;width:1021px;height:1px;background:#1a1b1e"></div>
<div class="a" style="left:0;top:175px;width:1021px;height:20px;background:linear-gradient(#5a6a8a 0,#43567c 1px,#4f6390 40%,#4a5d88 50%,#2f3648 62%,#23262d 85%,#1e2026)"></div>
<div class="a" style="left:2px;top:176px;width:22px;height:18px;border:1px solid #5a6a88;border-right-color:#7080a0;border-bottom-color:#6a7a98;background:linear-gradient(#566890,#46587e 45%,#262a34 55%,#1e2028)"></div>
<div class="t" style="left:5px;top:177px;font-size:12.5px;color:#e8e4d4">3D</div>
<div class="a" style="left:26px;top:175px;width:1px;height:20px;background:#1a1d24"></div>
<svg style="left:35px;top:181px" width="5" height="8"><path d="M5 0 L0 4 L5 8Z" fill="#e8e8e8"/></svg>
<div class="t" style="left:51px;top:178px;font-size:12px">Tripod</div>
<div class="t" style="left:95px;top:178px;font-size:12px">Image</div>
<div class="t" style="left:138px;top:178px;font-size:12px">Color</div>
<div class="t" style="left:177px;top:178px;font-size:12px">Grid</div>
<div class="t" style="left:209px;top:178px;font-size:12px">Pivot</div>
<div class="a" style="left:738px;top:176px;width:115px;height:17px;border:1px solid #1a1d24;border-radius:2px;background:linear-gradient(#5a6c94,#4a5a80 45%,#2e3444 55%,#262a34);box-shadow:inset 0 0 0 1px #6a7aa0"></div>
<svg style="left:746px;top:179px" width="11" height="11" viewBox="0 0 11 11"><path d="M3 11 L0 8 L7 0 L11 3 L5 11Z" fill="#4a90e8"/><path d="M7 0 L11 3 L9 5 L5 2Z" fill="#b0d8ff"/></svg>
<svg style="left:762px;top:178px" width="11" height="12" viewBox="0 0 11 12"><path d="M1 11 L10 1" stroke="#a020c0" stroke-width="2"/><circle cx="10" cy="1.5" r="1.5" fill="#d070e0"/><circle cx="1.5" cy="10.5" r="1.5" fill="#d070e0"/></svg>
<svg style="left:777px;top:178px" width="12" height="12" viewBox="0 0 12 12"><path d="M0 4 L6 0 L12 3 L11 10 L5 12 L1 9Z" fill="#3a88e8"/><path d="M0 4 L6 0 L12 3 L6 6Z" fill="#e04050"/><path d="M6 6 L12 3 L11 10 L5 12Z" fill="#2a60b0"/></svg>
<svg style="left:792px;top:178px" width="11" height="11" viewBox="0 0 11 11"><rect width="11" height="11" fill="#f0f0f0"/><path d="M1 1h3v3H1zM7 1h3v3H7zM4 4h3v3H4zM1 7h3v3H1zM7 7h3v3H7z" fill="#3a2a8a"/></svg>
<svg style="left:808px;top:179px" width="11" height="10" viewBox="0 0 11 10"><rect y="3" width="11" height="7" fill="#222"/><path d="M0 0 L11 1 L11 3 L0 3Z" fill="#444"/></svg>
<svg style="left:826px;top:177px" width="9" height="14" viewBox="0 0 9 14"><ellipse cx="4.5" cy="5" rx="4.5" ry="5" fill="#f0e070"/><rect x="2.5" y="9" width="4" height="4" fill="#909090"/></svg>
<svg style="left:843px;top:183px" width="6" height="4"><path d="M0 0 H6 L3 3.5Z" fill="#e8e8e8"/></svg>
<div class="vbtn a" style="left:858px;width:54px"></div>
<svg style="left:862px;top:178px" width="13" height="13" viewBox="0 0 13 13"><circle cx="5" cy="5" r="4" fill="#e8f0ff" stroke="#aaa" stroke-width="1.2"/><path d="M8 8 L12 12" stroke="#7a2a10" stroke-width="2.4"/></svg>
<div class="t" style="left:880px;top:178px;font-size:12px">Zoom</div>
<div class="vbtn a" style="left:913px;width:43px"></div>
<svg style="left:917px;top:178px" width="11" height="13" viewBox="0 0 11 13"><path d="M2 6 V2 Q3 1 4 2 V1 Q5 0 6 1 V1.5 Q7 1 8 2 V3 Q9 2.5 10 3.5 V8 Q10 13 5 13 Q2 13 0 8 L1 6Z" fill="#f8f8f8" stroke="#6a7a9a" stroke-width=".7"/></svg>
<div class="t" style="left:934px;top:178px;font-size:12px">Pan</div>
<div class="vbtn a" style="left:957px;width:38px"></div>
<svg style="left:960px;top:178px" width="13" height="13" viewBox="0 0 13 13"><path d="M0 3V0H3M10 0H13V3M13 10V13H10M3 13H0V10" stroke="#111" fill="none"/><rect x="4" y="4" width="8" height="8" fill="#a8e890"/><circle cx="4" cy="4" r="3" fill="#8a2a3a"/></svg>
<div class="t" style="left:978px;top:178px;font-size:12px">Fit</div>
<div class="a" style="left:999px;top:176px;width:19px;height:18px;border:1px solid #1a1d24;background:linear-gradient(#5a6c94,#4a5a80 45%,#2e3444 55%,#262a34);box-shadow:inset 0 0 0 1px #6a7aa0"></div>
<svg style="left:1003px;top:182px" width="11" height="6"><path d="M0 0 H11 L5.5 6Z" fill="#fff"/></svg>
<!-- VIEWPORT -->
<div id="vp" class="a">
<div class="a" style="left:0;top:0;width:1021px;height:6px;background:linear-gradient(rgba(0,0,0,.14),rgba(0,0,0,0))"></div>
<div class="a" style="left:0;top:0;width:5px;height:479px;background:linear-gradient(90deg,#8a8a8a,#c9c9c9)"></div><div class="a" style="left:1015px;top:0;width:6px;height:479px;background:linear-gradient(90deg,#c9c9c9,#8a8a8a)"></div>

<svg width="1021" height="479" style="left:0;top:0">
<g stroke="#949494" stroke-width="1" fill="none" transform="translate(0,-195)">
<line x1="0" y1="334" x2="114" y2="323"/>
<line x1="0" y1="378.8" x2="422" y2="323"/>
<line x1="0" y1="475" x2="735" y2="323"/>
<line x1="401" y1="323" x2="1021" y2="497"/>
<line x1="655" y1="323" x2="1021" y2="385.5"/>
<line x1="908" y1="323" x2="1021" y2="336.5"/>
<line x1="1021" y1="336.5" x2="340" y2="674"/>
<line x1="146" y1="323" x2="597" y2="674" stroke="#5a7090"/>
</g>

<g transform="translate(0,-195)">
 <ellipse cx="448.5" cy="285.5" rx="11.5" ry="5" fill="#7e7e7e" transform="rotate(-33 448.5 285.5)"/>
 <ellipse cx="515.5" cy="279" rx="9.5" ry="4.6" fill="#7e7e7e" transform="rotate(-28 515.5 279)"/>
 <path d="M441.5 287.5 L522.5 277 L523 298 L517 298.5 L517.5 284.3 L447 292.2 L447.5 304 L441.5 304.5 Z" fill="#050505"/>
 <path d="M413.8 333 L421 322 L424 318.9 L425.5 309.5 L429.6 305.4 L434.3 304.3 L526.9 299 Q531.6 300 532.5 303 Q534 314 532.2 326 Q530 330.5 526.9 331.2 L443.7 343.5 L436.6 342 L433 339 L413.8 334.5 Z" fill="#080808"/>
 <path d="M442.8 315 Q446.5 320 445.5 327.5 Q444 321 442.8 315Z" fill="#b8b8b8"/>
 <path d="M515.2 347.6 Q524 341 530.4 335.3 Q535 327 539.8 320 L545.6 311.9 L548.6 303.1" stroke="#0a0a0a" stroke-width="1.8" fill="none"/>
 <path d="M535.5 314.2 L540.5 316.5" stroke="#0a0a0a" stroke-width="1.5"/>
 <!-- tripod -->
 <path d="M25.5 645 V658" stroke="#8ab888" stroke-width="1.2"/>
 <path d="M18.6 638.5 L24.2 647.5 L21.5 647.5 L21.5 653.5 L27.5 653.5 L28 650.5 L36.3 656.6 L27.5 662 L27.2 659.5 L15.3 659.5 L15.3 647.5 L12.5 647.5 Z" fill="#e0d8c4" fill-opacity=".85" stroke="#d8aa58" stroke-width="1"/>
 <path d="M25.5 645 V658" stroke="#7ab87a" stroke-width="1" opacity=".8"/>
 <path d="M14 662 L25.5 658" stroke="#f06060" stroke-width="1" stroke-dasharray="2 1"/>
 <path d="M25.5 658 L34.5 663" stroke="#3a70f0" stroke-width="1.2" stroke-dasharray="1.5 1"/>
 <text x="21.8" y="641.5" font-family="Liberation Mono" font-weight="bold" font-size="10.5" fill="#10a010">y</text>
 <text x="6.5" y="667" font-family="Liberation Mono" font-weight="bold" font-size="9" fill="#f01010">x</text>
 <text x="36.5" y="668" font-family="Liberation Mono" font-weight="bold" font-size="9" fill="#1040f0">z</text>
</g>
</svg>
</div>
<div class="a" style="left:1021px;top:70px;width:5px;height:604px;background:#262626"></div>
<!-- RIGHT PANEL -->
<div id="rp" class="a"></div>

<!-- RIGHT PANEL DETAILS -->
<div class="a" style="left:1025px;top:70px;width:335px;height:18px;background:linear-gradient(#3c4862,#34405a 55%,#262830 60%,#232323)"></div>
<div class="t" style="left:1029px;top:73px;font-size:11.5px">Scene nodes browser</div>
<div class="xbtn a" style="left:1325px;top:71px"><svg style="left:3px;top:2px" width="9" height="11" viewBox="0 0 9 11"><path d="M2 0.5 H7 V1.5 H6 V6 H8 V7 H5 V10.5 H4 V7 H1 V6 H3 V1.5 H2Z" fill="#fff"/></svg></div>
<div class="xbtn a" style="left:1341px;top:71px"><svg style="left:3px;top:3px" width="9" height="9"><path d="M0.5 0.5 L8.5 8.5 M8.5 0.5 L0.5 8.5" stroke="#fff" stroke-width="1.4"/></svg></div>
<div class="a" style="left:1025px;top:88px;width:335px;height:25px;background:linear-gradient(#242424 0,#242424 1px,#4a5e8e 2px,#44588a 55%,#3a4a70 68%,#252628 74%,#222222)"></div>
<div class="a" style="left:1031px;top:90px;width:61px;height:22px;border:1px solid #2a3040;border-bottom:none;border-radius:3px 3px 0 0;background:linear-gradient(#5a6c92,#4e5e82 50%,#3e4a64 55%,#3a4660);box-shadow:inset 0 1px 0 #7a8ab0"></div>
<div class="a" style="left:1092px;top:92px;width:58px;height:20px;border:1px solid #1e2128;border-bottom:none;border-radius:3px 3px 0 0;background:linear-gradient(#3e4860,#343c50 45%,#24272e 55%,#202228);box-shadow:inset 0 1px 0 #5a6888"></div>
<div class="a" style="left:1150px;top:92px;width:65px;height:20px;border:1px solid #1e2128;border-bottom:none;border-radius:3px 3px 0 0;background:linear-gradient(#3e4860,#343c50 45%,#24272e 55%,#202228);box-shadow:inset 0 1px 0 #5a6888"></div>
<div class="t" style="left:1037px;top:95px;font-size:11.5px">Hierarchy</div>
<div class="t" style="left:1097px;top:96px;font-size:11.5px">Structure</div>
<div class="t" style="left:1155px;top:96px;font-size:11.5px">Properties</div>
<div class="a" style="left:1026px;top:113px;width:331px;height:20px;border-bottom:1px solid #9a7410;border-right:1px solid #8a6a20;background:linear-gradient(#fbeab0,#f6dc98 45%,#eecb58 50%,#e2b838 80%,#d4a428)"></div>
<div class="a" style="left:1026px;top:113px;width:12px;height:20px;background:linear-gradient(#f0d070,#e8c040 50%,#d8a820 55%,#c89418)"></div>
<div class="a" style="left:1038px;top:113px;width:1px;height:20px;background:#b08a20"></div>
<div class="a" style="left:1028px;top:119px;width:9px;height:9px;border:1px solid #555;background:#fafafa"></div>
<div class="a" style="left:1030px;top:123px;width:5px;height:1px;background:#222"></div>
<div class="a" style="left:1032px;top:121px;width:1px;height:5px;background:#222"></div>
<div class="a" style="left:1041px;top:117px;width:11px;height:11px;border:1px solid #6a6a6a;background:linear-gradient(#e8e8f0,#fff)"></div>
<svg style="left:1042px;top:114px" width="12" height="13" viewBox="0 0 12 13"><path d="M1.5 7 L4.5 11 L11 0.5" stroke="#1a40e0" stroke-width="2" fill="none"/></svg>
<div class="t" style="left:1055px;top:116px;font-size:11.6px;color:#1a1a1a;text-shadow:none">Whelen Ion Spitfire</div>
<div class="a" style="left:1359px;top:88px;width:1px;height:586px;background:#3a4660"></div>
<!-- bottom bar -->
<div class="a" style="left:1025px;top:647px;width:335px;height:27px;background:#2a2b2e;border-top:1px solid #4a5468;border-left:1px solid #4a5468"></div>
<div class="a" style="left:1030px;top:650px;width:325px;height:22px;background:linear-gradient(#404145,#393a3e 45%,#2e2f32 55%,#2a2b2e);border-radius:2px;box-shadow:0 0 3px rgba(0,0,0,.4)"></div>
<svg style="left:1038px;top:652px" width="16" height="16" viewBox="0 0 16 16"><path d="M1 3 L6 0 L12 2 L12 11 L6 14 L1 11Z" fill="#2a6ad8"/><path d="M1 3 L6 0 L12 2 L6 5Z" fill="#8ac0ff"/><path d="M6 5 L12 2 V11 L6 14Z" fill="#1a3a90"/><path d="M0 12 L6 15 L10 13" stroke="#c87a30" stroke-width="1.5" fill="none"/><rect x="11" y="11" width="4" height="4" fill="#e0f0ff"/></svg>
<div class="t" style="left:1057px;top:653px;font-size:11.5px">Isolated</div>
<svg style="left:1110px;top:652px" width="11" height="15" viewBox="0 0 11 15"><rect x="0.5" y="0.5" width="10" height="14" fill="#d8dce8" stroke="#6a7080"/><rect x="2" y="2" width="4" height="4" fill="#fff" stroke="#333" stroke-width=".7"/><rect x="2" y="8" width="4" height="4" fill="#fff" stroke="#333" stroke-width=".7"/></svg>
<div class="t" style="left:1127px;top:653px;font-size:11.5px">Show All</div>
<svg style="left:1183px;top:652px" width="13" height="16" viewBox="0 0 13 16"><rect x="0.5" y="0.5" width="12" height="15" fill="#eef2f8" stroke="#8a94a8"/><rect x="2.5" y="2.5" width="5" height="4" fill="#fff" stroke="#555" stroke-width=".8"/><rect x="2.5" y="9.5" width="5" height="4" fill="#fff" stroke="#555" stroke-width=".8"/><rect x="9" y="1" width="3" height="14" fill="#c8d4e8"/></svg>
<svg style="left:1206px;top:652px" width="13" height="16" viewBox="0 0 13 16"><rect x="0.5" y="0.5" width="12" height="15" fill="#dfe6f0" stroke="#8a94a8"/><rect x="2" y="2" width="9" height="3" fill="#8aa8d0"/><rect x="2" y="6.5" width="9" height="3" fill="#3a6ab0"/><rect x="2" y="11" width="9" height="3" fill="#a8a8a8"/><path d="M6.5 1 L10 5 H8 V9 H5 V5 H3Z" fill="#e81818"/></svg>
<svg style="left:1229px;top:652px" width="13" height="16" viewBox="0 0 13 16"><rect x="0.5" y="0.5" width="12" height="15" fill="#dfe6f0" stroke="#8a94a8"/><rect x="2" y="2" width="9" height="3" fill="#8aa8d0"/><rect x="2" y="6.5" width="9" height="3" fill="#3a6ab0"/><rect x="2" y="11" width="9" height="3" fill="#a8a8a8"/><path d="M6.5 15 L10 11 H8 V7 H5 V11 H3Z" fill="#e81818"/></svg>
<svg style="left:1252px;top:652px" width="13" height="16" viewBox="0 0 13 16"><rect x="0.5" y="0.5" width="12" height="15" fill="#dfe6f0" stroke="#8a94a8"/><rect x="2" y="2" width="9" height="3" fill="#8aa8d0"/><rect x="2" y="6.5" width="9" height="3" fill="#3a6ab0"/><rect x="2" y="11" width="9" height="3" fill="#a8a8a8"/><path d="M2 3 H9 V10" stroke="#e81818" stroke-width="2" fill="none"/><path d="M4 0.5 L1 3 L4 5.5Z" fill="#e81818"/></svg>
<svg style="left:1275px;top:652px" width="13" height="16" viewBox="0 0 13 16"><rect x="0.5" y="0.5" width="12" height="15" fill="#dfe6f0" stroke="#8a94a8"/><rect x="2" y="2" width="9" height="3" fill="#8aa8d0"/><rect x="2" y="6.5" width="9" height="3" fill="#3a6ab0"/><rect x="2" y="11" width="9" height="3" fill="#a8a8a8"/><rect x="0" y="0" width="6" height="6" fill="#fff" stroke="#111" stroke-width=".8"/><path d="M1.5 3 H4.5 M3 1.5 V4.5" stroke="#1a50d0" stroke-width="1"/></svg>
<svg style="left:1297px;top:652px" width="13" height="16" viewBox="0 0 13 16"><rect x="0.5" y="0.5" width="12" height="15" fill="#dfe6f0" stroke="#8a94a8"/><rect x="2" y="2" width="9" height="3" fill="#8aa8d0"/><rect x="2" y="6.5" width="9" height="3" fill="#3a6ab0"/><rect x="2" y="11" width="9" height="3" fill="#a8a8a8"/><rect x="0" y="0" width="6" height="6" fill="#fff" stroke="#111" stroke-width=".8"/><path d="M1.5 3 H4.5" stroke="#1a50d0" stroke-width="1.2"/></svg>
<!-- MESSAGING -->
<div id="msg" class="a"></div>

<div class="a" style="left:0;top:674px;width:1021px;height:2px;background:#3a4660"></div>
<div class="a" style="left:1021px;top:674px;width:339px;height:1px;background:#3a4458"></div>
<div class="a" style="left:4px;top:676px;width:97px;height:18px;border:1px solid #2a3244;border-radius:2px 2px 0 0;background:linear-gradient(#3e4a66,#485878 50%,#54679a);box-shadow:inset 0 -1px 0 #7888b0"></div>
<div class="t" style="left:9px;top:679px;font-size:11.5px">Messaging Bar</div>
<div class="a" style="left:0;top:695px;width:1256px;height:1px;background:#3a4250"></div>
<div class="a" style="left:0;top:696px;width:386px;height:42px;background:linear-gradient(90deg,#2e3036,#3a3b3e 30px,#3c3d40)"></div>
<div class="a" style="left:5px;top:698px;width:2px;height:40px;background:#4a5060"></div>
<div class="pbtn a" style="left:11px;top:698px;width:17px;height:24px"></div>
<div class="pbtn a" style="left:28px;top:698px;width:73px;height:30px"></div>
<div class="pbtn a" style="left:101px;top:698px;width:17px;height:24px"></div>
<div class="pbtn a" style="left:11px;top:722px;width:17px;height:18px"></div>
<div class="pbtn a" style="left:28px;top:728px;width:16px;height:12px"></div>
<div class="pbtn a" style="left:44px;top:728px;width:40px;height:12px"></div>
<div class="a" style="left:84px;top:728px;width:17px;height:12px;background:#303238"></div>
<div class="pbtn a" style="left:101px;top:722px;width:17px;height:18px"></div>
<svg style="left:15px;top:706px" width="9" height="9"><rect x="0" y="0" width="1.6" height="9" fill="#111"/><path d="M9 0 L2 4.5 L9 9Z" fill="#111"/></svg>
<svg style="left:106px;top:706px" width="9" height="9"><rect x="7.4" y="0" width="1.6" height="9" fill="#111"/><path d="M0 0 L7 4.5 L0 9Z" fill="#111"/></svg>
<div class="t" style="left:53px;top:706px;font-size:12px;font-weight:bold;color:#080808;text-shadow:none">Play</div>

<svg style="left:14px;top:731px" width="11" height="7"><path d="M5 0 L0 3.5 L5 7Z M10 0 L5 3.5 L10 7Z" fill="#111"/></svg>
<svg style="left:34px;top:733px" width="5" height="6"><path d="M5 0 L0 3 L5 6Z" fill="#111"/></svg>
<div class="t" style="left:60px;top:730px;font-size:11px;font-weight:bold;color:#111;text-shadow:none">1x</div>
<svg style="left:90px;top:733px" width="5" height="6"><path d="M0 0 L5 3 L0 6Z" fill="#111"/></svg>
<svg style="left:104px;top:731px" width="11" height="7"><path d="M0 0 L5 3.5 L0 7Z M5 0 L10 3.5 L5 7Z" fill="#111"/></svg>
<div class="t" style="left:137px;top:703px;font-size:11.5px">Animation:</div>
<div class="a" style="left:194px;top:698px;width:185px;height:21px;background:#d0d0d0"></div>
<svg style="left:365px;top:707px" width="9" height="5"><path d="M0.5 0.5 L4.5 4.5 L8.5 0.5" stroke="#9a9a9a" fill="none"/></svg>
<div class="a" style="left:127px;top:722px;width:90px;height:18px;border:1px solid #1e2430;border-radius:2px;background:linear-gradient(#60749e,#4e6088 60%,#44547a);box-shadow:inset 0 1px 0 #8090b8"></div>
<svg style="left:130px;top:724px" width="14" height="14"><rect x="0" y="0" width="14" height="14" fill="#8a5a20"/><rect x="2" y="2" width="10" height="10" fill="#d8d8d8"/><path d="M5 4 L10 7 L5 10Z" fill="#333"/></svg>
<div class="t" style="left:152px;top:728px;font-size:11.5px">Track Editor</div>
<div class="a" style="left:222px;top:722px;width:67px;height:18px;border:1px solid #2a2b2e;border-radius:2px;background:linear-gradient(#56585c,#4a4b4f)"></div>
<svg style="left:225px;top:723px" width="14" height="15"><rect x="1" y="3" width="4" height="12" fill="#4ab040"/><circle cx="9" cy="6" r="4" fill="#e04020"/><circle cx="9" cy="6" r="2" fill="#f0c020"/></svg>
<div class="t" style="left:247px;top:728px;font-size:11.5px;color:#1a1a1a;text-shadow:0 1px 0 rgba(255,255,255,.15)">Set Key</div>
<div class="a" style="left:294px;top:722px;width:86px;height:18px;border:1px solid #2a2b2e;border-radius:2px;background:linear-gradient(#56585c,#4a4b4f)"></div>
<svg style="left:297px;top:723px" width="14" height="15"><rect x="1" y="3" width="4" height="12" fill="#c04040"/><path d="M5 9 L8 13 L13 5" stroke="#30b040" stroke-width="2" fill="none"/></svg>
<div class="t" style="left:320px;top:728px;font-size:11.5px;color:#1a1a1a;text-shadow:0 1px 0 rgba(255,255,255,.15)">Free mode</div>
<div class="a" style="left:386px;top:696px;width:2px;height:42px;background:#1e1f22;border-right:1px solid #3a4252"></div>
<div class="a" style="left:389px;top:696px;width:868px;height:42px;background:#262626"></div>
<div class="a" style="left:391px;top:698px;width:6px;height:40px;background:#202124;border-left:1px solid #4a5262"></div>
<div class="a" style="left:397px;top:697px;width:858px;height:31px;background:linear-gradient(#222,#2e2e2e 6px,#303030 70%,#2a2a2a)"></div>
<div class="a" style="left:397px;top:728px;width:858px;height:10px;background:linear-gradient(#4a4a4a,#555 30%,#525252)"></div>
<svg style="left:397px;top:697px" width="858" height="31">
<path d="M5.5 4 V29" stroke="#7c7c7c"/><path d="M13.5 4 V9" stroke="#7c7c7c"/><path d="M20.5 4 V9" stroke="#7c7c7c"/><path d="M27.5 4 V9" stroke="#7c7c7c"/><path d="M34.5 4 V9" stroke="#7c7c7c"/><path d="M41.5 4 V9" stroke="#7c7c7c"/><path d="M48.5 4 V9" stroke="#7c7c7c"/><path d="M55.5 4 V9" stroke="#7c7c7c"/><path d="M62.5 4 V9" stroke="#7c7c7c"/><path d="M69.5 4 V9" stroke="#7c7c7c"/><path d="M76.5 4 V9" stroke="#7c7c7c"/><path d="M83.5 4 V9" stroke="#7c7c7c"/><path d="M90.5 4 V9" stroke="#7c7c7c"/><path d="M97.5 4 V9" stroke="#7c7c7c"/><path d="M104.5 4 V9" stroke="#7c7c7c"/><path d="M111.5 4 V9" stroke="#7c7c7c"/><path d="M118.5 4 V9" stroke="#7c7c7c"/><path d="M125.5 4 V9" stroke="#7c7c7c"/><path d="M132.5 4 V9" stroke="#7c7c7c"/><path d="M139.5 4 V9" stroke="#7c7c7c"/><path d="M146.5 4 V9" stroke="#7c7c7c"/><path d="M153.5 4 V9" stroke="#7c7c7c"/><path d="M160.5 4 V9" stroke="#7c7c7c"/><path d="M167.5 4 V9" stroke="#7c7c7c"/><path d="M174.5 4 V19" stroke="#7c7c7c"/><path d="M182.5 4 V9" stroke="#7c7c7c"/><path d="M189.5 4 V9" stroke="#7c7c7c"/><path d="M196.5 4 V9" stroke="#7c7c7c"/><path d="M203.5 4 V9" stroke="#7c7c7c"/><path d="M210.5 4 V9" stroke="#7c7c7c"/><path d="M217.5 4 V9" stroke="#7c7c7c"/><path d="M224.5 4 V9" stroke="#7c7c7c"/><path d="M231.5 4 V9" stroke="#7c7c7c"/><path d="M238.5 4 V9" stroke="#7c7c7c"/><path d="M245.5 4 V9" stroke="#7c7c7c"/><path d="M252.5 4 V9" stroke="#7c7c7c"/><path d="M259.5 4 V9" stroke="#7c7c7c"/><path d="M266.5 4 V9" stroke="#7c7c7c"/><path d="M273.5 4 V9" stroke="#7c7c7c"/><path d="M280.5 4 V9" stroke="#7c7c7c"/><path d="M287.5 4 V9" stroke="#7c7c7c"/><path d="M294.5 4 V9" stroke="#7c7c7c"/><path d="M301.5 4 V9" stroke="#7c7c7c"/><path d="M308.5 4 V9" stroke="#7c7c7c"/><path d="M315.5 4 V9" stroke="#7c7c7c"/><path d="M322.5 4 V9" stroke="#7c7c7c"/><path d="M329.5 4 V9" stroke="#7c7c7c"/><path d="M336.5 4 V9" stroke="#7c7c7c"/><path d="M343.5 4 V19" stroke="#7c7c7c"/><path d="M350.5 4 V9" stroke="#7c7c7c"/><path d="M358.5 4 V9" stroke="#7c7c7c"/><path d="M365.5 4 V9" stroke="#7c7c7c"/><path d="M372.5 4 V9" stroke="#7c7c7c"/><path d="M379.5 4 V9" stroke="#7c7c7c"/><path d="M386.5 4 V9" stroke="#7c7c7c"/><path d="M393.5 4 V9" stroke="#7c7c7c"/><path d="M400.5 4 V9" stroke="#7c7c7c"/><path d="M407.5 4 V9" stroke="#7c7c7c"/><path d="M414.5 4 V9" stroke="#7c7c7c"/><path d="M421.5 4 V9" stroke="#7c7c7c"/><path d="M428.5 4 V9" stroke="#7c7c7c"/><path d="M435.5 4 V9" stroke="#7c7c7c"/><path d="M442.5 4 V9" stroke="#7c7c7c"/><path d="M449.5 4 V9" stroke="#7c7c7c"/><path d="M456.5 4 V9" stroke="#7c7c7c"/><path d="M463.5 4 V9" stroke="#7c7c7c"/><path d="M470.5 4 V9" stroke="#7c7c7c"/><path d="M477.5 4 V9" stroke="#7c7c7c"/><path d="M484.5 4 V9" stroke="#7c7c7c"/><path d="M491.5 4 V9" stroke="#7c7c7c"/><path d="M498.5 4 V9" stroke="#7c7c7c"/><path d="M505.5 4 V9" stroke="#7c7c7c"/><path d="M512.5 4 V19" stroke="#7c7c7c"/><path d="M519.5 4 V9" stroke="#7c7c7c"/><path d="M526.5 4 V9" stroke="#7c7c7c"/><path d="M534.5 4 V9" stroke="#7c7c7c"/><path d="M541.5 4 V9" stroke="#7c7c7c"/><path d="M548.5 4 V9" stroke="#7c7c7c"/><path d="M555.5 4 V9" stroke="#7c7c7c"/><path d="M562.5 4 V9" stroke="#7c7c7c"/><path d="M569.5 4 V9" stroke="#7c7c7c"/><path d="M576.5 4 V9" stroke="#7c7c7c"/><path d="M583.5 4 V9" stroke="#7c7c7c"/><path d="M590.5 4 V9" stroke="#7c7c7c"/><path d="M597.5 4 V9" stroke="#7c7c7c"/><path d="M604.5 4 V9" stroke="#7c7c7c"/><path d="M611.5 4 V9" stroke="#7c7c7c"/><path d="M618.5 4 V9" stroke="#7c7c7c"/><path d="M625.5 4 V9" stroke="#7c7c7c"/><path d="M632.5 4 V9" stroke="#7c7c7c"/><path d="M639.5 4 V9" stroke="#7c7c7c"/><path d="M646.5 4 V9" stroke="#7c7c7c"/><path d="M653.5 4 V9" stroke="#7c7c7c"/><path d="M660.5 4 V9" stroke="#7c7c7c"/><path d="M667.5 4 V9" stroke="#7c7c7c"/><path d="M674.5 4 V9" stroke="#7c7c7c"/><path d="M681.5 4 V19" stroke="#7c7c7c"/><path d="M688.5 4 V9" stroke="#7c7c7c"/><path d="M695.5 4 V9" stroke="#7c7c7c"/><path d="M702.5 4 V9" stroke="#7c7c7c"/><path d="M710.5 4 V9" stroke="#7c7c7c"/><path d="M717.5 4 V9" stroke="#7c7c7c"/><path d="M724.5 4 V9" stroke="#7c7c7c"/><path d="M731.5 4 V9" stroke="#7c7c7c"/><path d="M738.5 4 V9" stroke="#7c7c7c"/><path d="M745.5 4 V9" stroke="#7c7c7c"/><path d="M752.5 4 V9" stroke="#7c7c7c"/><path d="M759.5 4 V9" stroke="#7c7c7c"/><path d="M766.5 4 V9" stroke="#7c7c7c"/><path d="M773.5 4 V9" stroke="#7c7c7c"/><path d="M780.5 4 V9" stroke="#7c7c7c"/><path d="M787.5 4 V9" stroke="#7c7c7c"/><path d="M794.5 4 V9" stroke="#7c7c7c"/><path d="M801.5 4 V9" stroke="#7c7c7c"/><path d="M808.5 4 V9" stroke="#7c7c7c"/><path d="M815.5 4 V9" stroke="#7c7c7c"/><path d="M822.5 4 V9" stroke="#7c7c7c"/><path d="M829.5 4 V9" stroke="#7c7c7c"/><path d="M836.5 4 V9" stroke="#7c7c7c"/><path d="M843.5 4 V9" stroke="#7c7c7c"/><path d="M850.5 4 V19" stroke="#7c7c7c"/><path d="M857.5 4 V9" stroke="#7c7c7c"/><path d="M5 4.5 H858" stroke="#7c7c7c"/></svg>
<div class="t" style="left:405px;top:716px;font-size:11px;color:#6c7280;text-shadow:none;line-height:11px">0</div>
<div class="t" style="left:565px;top:716px;font-size:11px;color:#6c7280;text-shadow:none;line-height:11px">24</div>
<div class="t" style="left:734px;top:716px;font-size:11px;color:#6c7280;text-shadow:none;line-height:11px">48</div>
<div class="t" style="left:903px;top:716px;font-size:11px;color:#6c7280;text-shadow:none;line-height:11px">72</div>
<div class="t" style="left:1072px;top:716px;font-size:11px;color:#6c7280;text-shadow:none;line-height:11px">96</div>
<div class="t" style="left:1241px;top:716px;font-size:11px;color:#6c7280;text-shadow:none;line-height:11px">120</div>
<div class="a" style="left:1255px;top:696px;width:105px;height:42px;background:#262626"></div>
<!-- TASKBAR -->
<div id="task" class="a"></div>

<div class="a" style="left:296px;top:738px;width:36px;height:30px;background:#333436"></div>
<div class="a" style="left:152px;top:766px;width:28px;height:2px;background:#a8e8a8"></div>
<div class="a" style="left:296px;top:766px;width:36px;height:2px;background:#a8e8a8"></div>
<div class="a" style="left:411px;top:766px;width:28px;height:2px;background:#a8e8a8"></div>
<div class="a" style="left:559px;top:766px;width:28px;height:2px;background:#a8e8a8"></div>
<svg style="left:10px;top:745px" width="16" height="16" viewBox="0 0 16 16"><path d="M0 2.2 L6.5 1.3 V7.5 H0Z M7.5 1.1 L16 0 V7.5 H7.5Z M0 8.5 H6.5 V14.7 L0 13.8Z M7.5 8.5 H16 V16 L7.5 14.9Z" fill="#fff"/></svg>
<svg style="left:46px;top:745px" width="16" height="16"><circle cx="8" cy="8" r="6.6" stroke="#fff" stroke-width="2" fill="none"/></svg>
<svg style="left:81px;top:745px" width="18" height="16" viewBox="0 0 18 16"><path d="M3.5 3.5 H14.5 V12.5 H3.5Z" stroke="#fff" fill="none"/><path d="M0 1 H3 M0 15 H3 M15 1 H18 M15 15 H18 M17 4 V12" stroke="#fff"/><path d="M1 4 V12" stroke="#fff"/></svg>
<svg style="left:120px;top:745px" width="17" height="16" viewBox="0 0 17 16"><path d="M15.5 9.5 H4 Q4.5 13.5 9 13.5 Q12.5 13.5 15 12 V15 Q12.5 16 9 16 Q1 16 1 8.5 Q1 0 9 0 Q16 0 16 7.5 Z M4.5 6.5 H12 Q11.5 3 8.5 3 Q5.5 3 4.5 6.5Z" fill="#1e88e5"/></svg>
<svg style="left:158px;top:746px" width="17" height="15" viewBox="0 0 17 15"><path d="M0 1 H6 L7.5 3 H17 V15 H0Z" fill="#e8b84a"/><path d="M0 5 H17 V15 H0Z" fill="#f8d878"/><path d="M5 9 H12 V15 H10 V11 H7 V15 H5Z" fill="#2aa0e0"/></svg>
<svg style="left:194px;top:745px" width="17" height="17" viewBox="0 0 17 17"><path d="M1 5 H16 V16 H1Z" fill="#fff"/><path d="M5 5 V3 Q5 0.5 8.5 0.5 Q12 0.5 12 3 V5" stroke="#fff" stroke-width="1.2" fill="none"/><rect x="5" y="7.5" width="3" height="3" fill="#f25022"/><rect x="9" y="7.5" width="3" height="3" fill="#7fba00"/><rect x="5" y="11.5" width="3" height="3" fill="#00a4ef"/><rect x="9" y="11.5" width="3" height="3" fill="#ffb900"/></svg>
<svg style="left:232px;top:747px" width="17" height="13" viewBox="0 0 17 13"><path d="M0 3 L8.5 0 L17 3 V13 H0Z" fill="#fff"/><path d="M0 3 L8.5 8 L17 3" stroke="#101010" stroke-width="1.3" fill="none"/></svg>
<svg style="left:269px;top:745px" width="16" height="16" viewBox="0 0 16 16"><rect width="16" height="16" fill="#f0a020"/><path d="M4 3.5 H12 V5 L6.5 11.5 H12 V13 H4 V11.5 L9.5 5 H4Z" fill="#5a2a9a"/></svg>
<svg style="left:305px;top:745px" width="15" height="17" viewBox="0 0 15 17"><path d="M3 0 H15 V3 L4 14 H13 L10 17 H0 V14 L11 3 H3Z" fill="#e03030"/><path d="M11 3 L4 14 H13 L15 11 V3Z" fill="#2a58d0" opacity=".9"/></svg>
<svg style="left:343px;top:745px" width="16" height="16" viewBox="0 0 16 16"><rect width="16" height="16" fill="#5a2a18"/><path d="M2 16 L8 2 L14 16 L11 16 L8 8 L5 16Z" fill="#d88040"/></svg>
<svg style="left:380px;top:746px" width="16" height="14" viewBox="0 0 16 14"><path d="M0 0 H5 L8 8 L11 0 H16 L9 14 H7Z" fill="#4a7a4a"/><path d="M2 1 L8 12 L14 1" stroke="#a0c8a0" stroke-width="1" fill="none"/></svg>
<svg style="left:418px;top:745px" width="14" height="16" viewBox="0 0 14 16"><path d="M1.5 0 H12.5 Q14 0 14 1.5 V16 L11 13 H1.5 Q0 13 0 11.5 V1.5 Q0 0 1.5 0Z" fill="#7289da"/><path d="M3 8 Q3 4 5.5 3.5 L6 4.5 H8 L8.5 3.5 Q11 4 11 8 Q10 10 8.5 10 L8 9 H6 L5.5 10 Q4 10 3 8Z" fill="#fff"/><circle cx="5.5" cy="7" r=".9" fill="#7289da"/><circle cx="8.5" cy="7" r=".9" fill="#7289da"/></svg>
<svg style="left:454px;top:745px" width="16" height="17" viewBox="0 0 16 17"><path d="M8 0 L16 4 V13 L8 17 L0 13 V4Z" fill="#8a5a30"/><path d="M8 0 L16 4 L8 8 L0 4Z" fill="#5ab040"/><path d="M0 4 L8 8 V10 L0 6Z" fill="#4a9a30"/></svg>
<svg style="left:492px;top:745px" width="14" height="17" viewBox="0 0 14 17"><path d="M0 0 H14 V14 L7 17 L0 14Z" fill="#1a1a1a" stroke="#444" stroke-width=".5"/><text x="7" y="8" font-family="Liberation Sans" font-size="5.5" font-weight="bold" fill="#fff" text-anchor="middle">EPIC</text><text x="7" y="12" font-family="Liberation Sans" font-size="2.5" fill="#aaa" text-anchor="middle">GAMES</text></svg>
<svg style="left:527px;top:745px" width="18" height="16" viewBox="0 0 18 16"><path d="M2 11 V8 Q2 1 9 1 Q16 1 16 8 V11" stroke="#1030e0" stroke-width="2" fill="none"/><rect x="0.5" y="9" width="3.5" height="6" rx="1" fill="#1030e0"/><rect x="14" y="9" width="3.5" height="6" rx="1" fill="#1030e0"/><ellipse cx="9" cy="10" rx="5" ry="4" fill="#f0a020"/><path d="M4 10 H14" stroke="#e02020" stroke-width="2"/></svg>
<svg style="left:565px;top:745px" width="16" height="16" viewBox="0 0 16 16"><circle cx="8" cy="8" r="8" fill="#db4437"/><path d="M8 8 L1.1 4 A8 8 0 0 0 8 16 Z" fill="#0f9d58"/><path d="M8 8 L14.9 4 A8 8 0 0 1 8 16 Z" fill="#ffcd40"/><path d="M8 8 L1.07 4 H14.93 Z" fill="#db4437"/><circle cx="8" cy="8" r="3.6" fill="#fff"/><circle cx="8" cy="8" r="2.8" fill="#4285f4"/></svg>
<svg style="left:602px;top:746px" width="16" height="15" viewBox="0 0 16 15"><path d="M0 3 L7 6 L12 1 Q14 0 15 1 Q16 2 14 4 L10 9 L13 15 L11 15 L7 11 L4 13 L4 11 L2 10 Z" fill="#e8e8e8"/></svg>
<svg style="left:639px;top:745px" width="17" height="17" viewBox="0 0 17 17"><circle cx="8.5" cy="8.5" r="8.5" fill="#f0905a"/><path d="M8.5 8.5 Q10 8 10 9.5 Q9.5 11.5 7.5 11 Q5 10 6 7 Q7.5 4.5 10.5 5.5 Q13.5 7 12.5 11 Q11 14.5 7 13.8 Q2.5 12.5 3 8" stroke="#fff" stroke-width="1.2" fill="none"/></svg>
<svg style="left:676px;top:745px" width="16" height="16" viewBox="0 0 16 16"><rect x=".5" y=".5" width="15" height="15" rx="2" fill="#0e0e0e" stroke="#c89020"/><text x="4" y="11" font-family="Liberation Sans" font-size="9" font-weight="bold" fill="#f0b030">R</text><path d="M11 9 L12 11 L14 11 L12.5 12.5 L13 14.5 L11 13.3 L9 14.5 L9.5 12.5 L8 11 L10 11Z" fill="#f0d070"/></svg>
<svg style="left:1149px;top:745px" width="15" height="16" viewBox="0 0 15 16"><circle cx="11" cy="3.5" r="2.5" stroke="#fff" fill="none"/><path d="M7.5 10 Q8 6.5 11 6.5 Q14 6.5 14.5 10" stroke="#fff" fill="none"/><circle cx="5" cy="8.5" r="2.5" stroke="#fff" fill="none"/><path d="M0.5 15.5 Q1 11.5 5 11.5 Q9 11.5 9.5 15.5" stroke="#fff" fill="none"/></svg>
<svg style="left:1180px;top:750px" width="13" height="7"><path d="M0.5 6.5 L6.5 0.7 L12.5 6.5" stroke="#fff" stroke-width="1.1" fill="none"/></svg>
<svg style="left:1202px;top:747px" width="17" height="14" viewBox="0 0 17 14"><path d="M4.5 1.5 H16.5 V9.5 H4.5 Z M10.5 9.5 V13 M7 13.5 H14" stroke="#fff" fill="none"/><rect x=".5" y=".5" width="6" height="5" fill="#101010" stroke="#fff"/><path d="M2 3 L3 4 L5 2" stroke="#fff" stroke-width=".8" fill="none"/><path d="M3.5 6 V12" stroke="#fff"/></svg>
<svg style="left:1226px;top:746px" width="17" height="14" viewBox="0 0 17 14"><path d="M0.5 4.5 H3.5 L7.5 0.8 V13.2 L3.5 9.5 H0.5 Z" stroke="#fff" fill="none"/><path d="M10 4.5 Q11.5 7 10 9.5 M12.5 2.5 Q15 7 12.5 11.5 M14.8 0.8 Q18.5 7 14.8 13.2" stroke="#fff" fill="none"/></svg>
<div class="t" style="left:1255px;top:747px;font-size:11.4px;color:#fff;text-shadow:none;line-height:12px">4:45 PM</div>
<svg style="left:1319px;top:745px" width="17" height="17" viewBox="0 0 17 17"><path d="M0 0 H17 V13 H11 L8.5 17 L6 13 H0Z" fill="#fff"/><path d="M3 3.5 H14 M3 6.5 H14 M3 9.5 H10" stroke="#101010" stroke-width="1.2"/></svg>
<div class="a" style="left:1356px;top:740px;width:1px;height:28px;background:#3a3a3a"></div>
</body></html>
